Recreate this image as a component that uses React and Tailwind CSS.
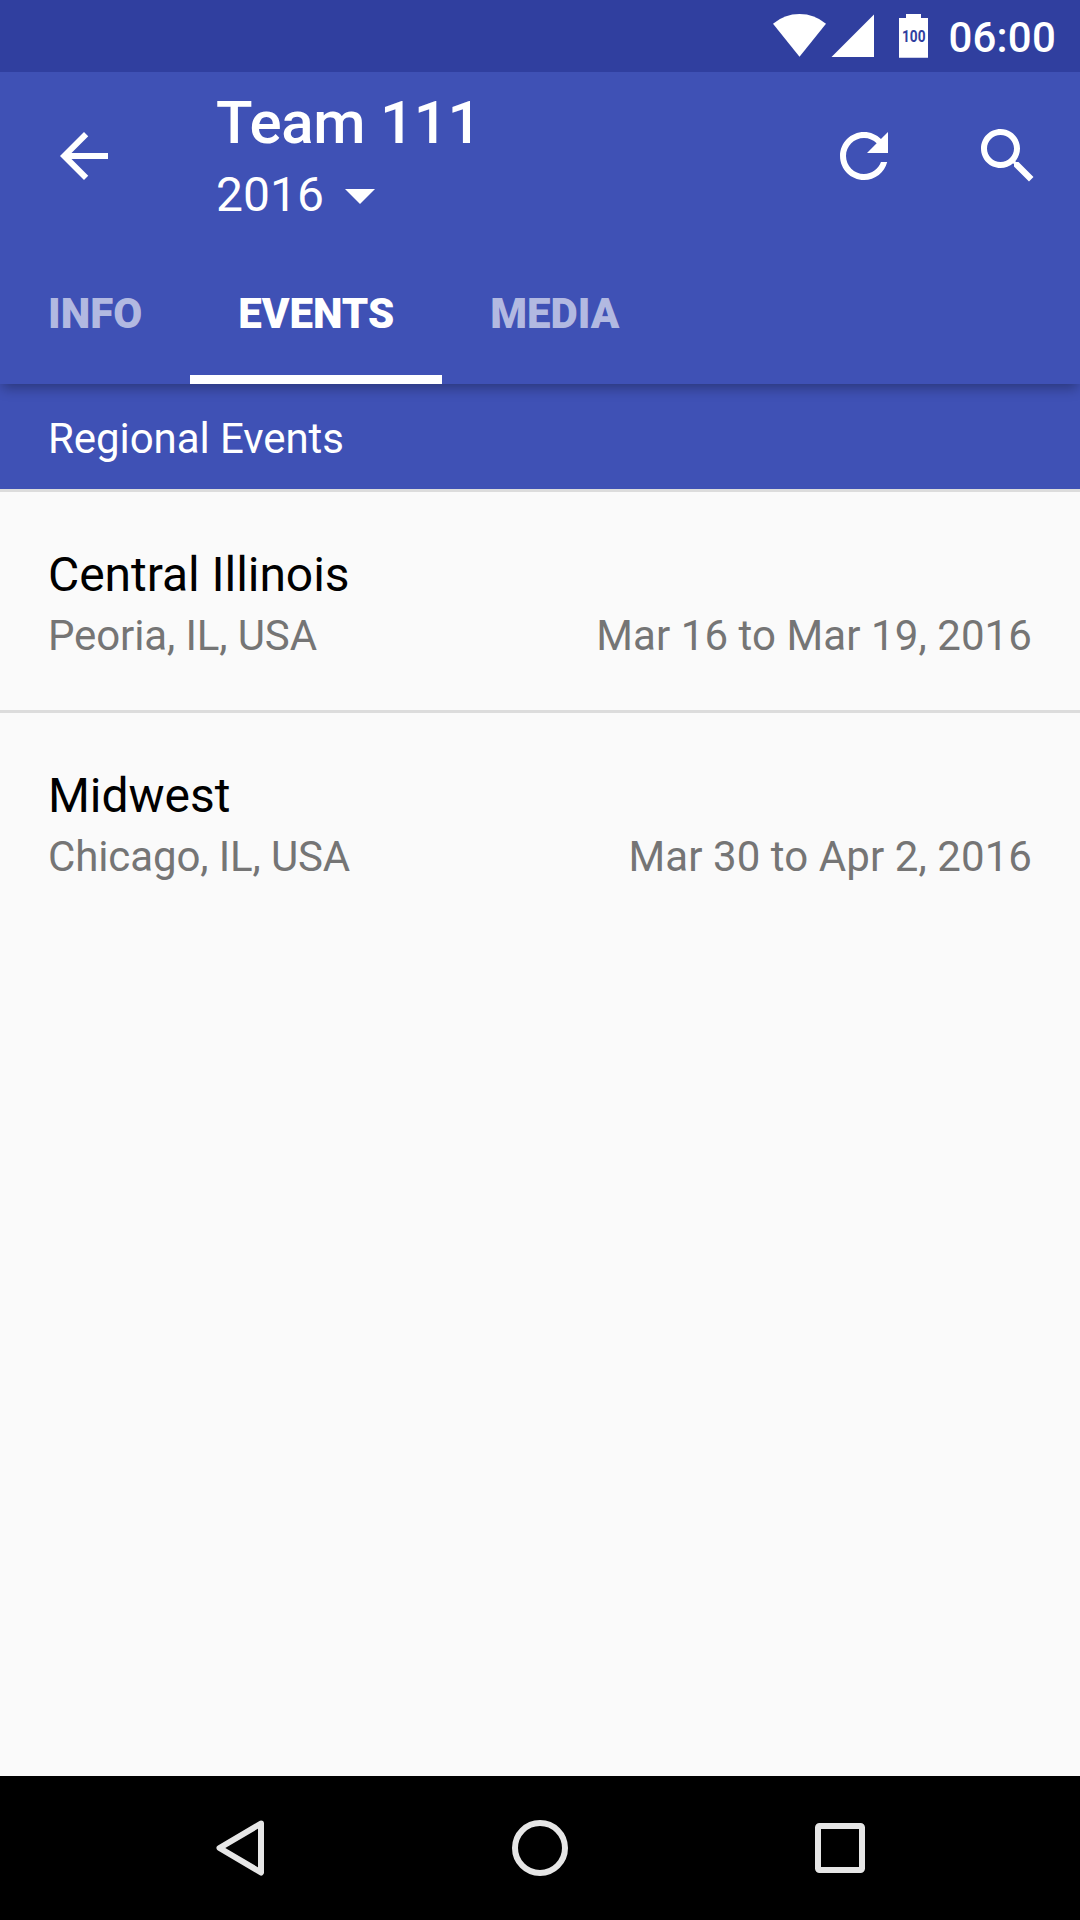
const tabs = [
    { key: 'info', label: 'INFO' },
    { key: 'events', label: 'EVENTS' },
    { key: 'media', label: 'MEDIA' },
]

const events = [
    { key: 'ilpe', name: 'Central Illinois', location: 'Peoria, IL, USA', dates: 'Mar 16 to Mar 19, 2016' },
    { key: 'ilch', name: 'Midwest', location: 'Chicago, IL, USA', dates: 'Mar 30 to Apr 2, 2016' },
]

function Icon({ d }) {
    return (
        <svg viewBox="0 0 24 24" className="size-[72px] shrink-0 fill-white">
            <path d={d} />
        </svg>
    )
}

function StatusBar() {
    return (
        <div className="z-20 flex h-[72px] justify-end bg-[#303f9f] pr-6 text-white">
            <svg width="160" height="72" viewBox="770 0 160 72" className="mr-[18px] fill-white">
                <path d="M799.5 56.7 773 23.7Q784.5 14 799.5 14T826 23.7Z" />
                <path d="M831.5 57 874 14.5V57Z" />
                <path d="M906 14h15v4h7v39.7h-29V18h7Z" />
                <text
                    x="902"
                    y="42"
                    textLength="23.5"
                    lengthAdjust="spacingAndGlyphs"
                    className="fill-[#303f9f] text-[16.5px] font-bold"
                >
                    100
                </text>
            </svg>
            <span className="pt-[13px] text-[42px] leading-[50px] font-medium tracking-[0.2px]">06:00</span>
        </div>
    )
}

function Toolbar() {
    return (
        <div className="flex h-[168px] items-center pl-12 pr-9 text-white">
            <Icon d="M20 11H7.83l5.59-5.59L12 4l-8 8 8 8 1.41-1.41L7.83 13H20v-2z" />
            <div className="ml-24 flex h-full flex-1 flex-col pt-4">
                <h1 className="text-[60px] leading-[70px] font-medium tracking-[-0.3px]">Team 111</h1>
                <div className="flex items-center text-[48px] leading-[74px]">
                    <span>2016</span>
                    <svg viewBox="0 0 30 15" className="mt-0.5 ml-[21px] h-[15px] w-[30px] fill-white">
                        <path d="M0 0h30L15 15Z" />
                    </svg>
                </div>
            </div>
            <div className="flex gap-[72px]">
                <Icon d="M17.65 6.35C16.2 4.9 14.21 4 12 4c-4.42 0-7.99 3.58-7.99 8s3.57 8 7.99 8c3.73 0 6.84-2.55 7.73-6h-2.08c-.82 2.33-3.04 4-5.65 4-3.31 0-6-2.69-6-6s2.69-6 6-6c1.66 0 3.14.69 4.22 1.78L13 11h7V4l-2.35 2.35z" />
                <Icon d="M15.5 14h-.79l-.28-.27C15.41 12.59 16 11.11 16 9.5 16 5.91 13.09 3 9.5 3S3 5.91 3 9.5 5.91 16 9.5 16c1.61 0 3.09-.59 4.23-1.57l.27.28v.79l5 4.99L20.49 19l-4.99-5zm-6 0C7.01 14 5 11.99 5 9.5S7.01 5 9.5 5 14 7.01 14 9.5 11.99 14 9.5 14z" />
            </div>
        </div>
    )
}

function Tabs({ active }) {
    return (
        <div className="flex h-36 text-[42px] leading-[50px] font-black">
            {tabs.map((tab) => (
                <div
                    key={tab.key}
                    className={
                        tab.key === active
                            ? 'border-b-9 border-white px-12 pt-[49px] text-white'
                            : 'px-12 pt-[49px] text-[#b2b9e1]'
                    }
                >
                    {tab.label}
                </div>
            ))}
        </div>
    )
}

function EventRow({ event }) {
    return (
        <li className="h-[221px] px-12 pt-[55px]">
            <h3 className="text-[48px] leading-[56px] tracking-[-0.05px] text-black">{event.name}</h3>
            <div className="mt-2 flex justify-between text-[42px] leading-[50px] text-[#757575]">
                <span className="tracking-[-0.12px]">{event.location}</span>
                <span className="tracking-[0.08px]">{event.dates}</span>
            </div>
        </li>
    )
}

function NavBar() {
    return (
        <div className="flex h-36 items-center justify-between bg-black px-[204px]">
            <svg viewBox="0 0 72 72" className="size-[72px] fill-none stroke-[#e6e6e6] stroke-6">
                <path d="M57 11.5 15.5 36 57 60.5Z" strokeLinejoin="round" />
            </svg>
            <svg viewBox="0 0 72 72" className="size-[72px] fill-none stroke-[#e6e6e6] stroke-6">
                <circle cx="36" cy="36" r="25" />
            </svg>
            <svg viewBox="0 0 72 72" className="size-[72px] fill-none stroke-[#e6e6e6] stroke-6">
                <rect x="14" y="14" width="44" height="44" rx="1.5" />
            </svg>
        </div>
    )
}

export default function App() {
    return (
        <div className="flex h-[1920px] w-[1080px] flex-col overflow-hidden bg-[#fafafa] font-[Roboto,sans-serif]">
            <StatusBar />
            <header className="z-10 bg-[#3f51b5] shadow-[0_6px_12px_-2px_rgba(0,0,0,0.32)]">
                <Toolbar />
                <Tabs active="events" />
            </header>
            <main className="flex-1">
                <h2 className="h-[105px] bg-[#3f51b5] px-12 pt-[30px] text-[42px] leading-[50px] tracking-[-0.07px] text-white">
                    Regional Events
                </h2>
                <ul className="divide-y-3 divide-[#dcdcdc] border-t-3 border-[#dcdcdc]">
                    {events.map((event) => (
                        <EventRow key={event.key} event={event} />
                    ))}
                </ul>
            </main>
            <NavBar />
        </div>
    )
}
